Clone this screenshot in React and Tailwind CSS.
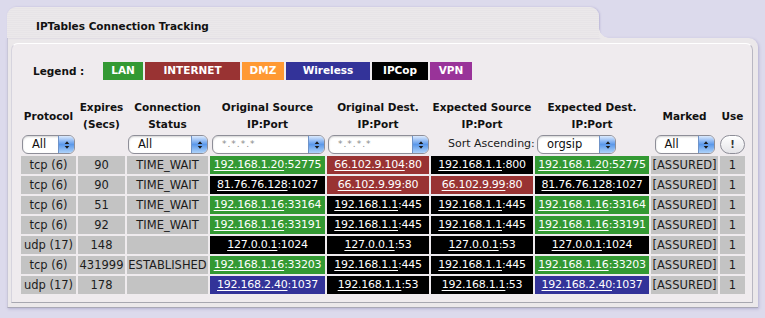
import React from 'react';

const legend = [
  { name: 'LAN', bg: 'bg-[#339933]', w: 'w-[40px]' },
  { name: 'INTERNET', bg: 'bg-[#993333]', w: 'w-[95px]' },
  { name: 'DMZ', bg: 'bg-[#ff9933]', w: 'w-[42px]' },
  { name: 'Wireless', bg: 'bg-[#333399]', w: 'w-[84px]' },
  { name: 'IPCop', bg: 'bg-[#000000]', w: 'w-[56px]' },
  { name: 'VPN', bg: 'bg-[#993399]', w: 'w-[42px]' },
];

const zone = {
  g: 'bg-[#339933]',
  r: 'bg-[#993333]',
  k: 'bg-[#000000]',
  b: 'bg-[#333399]',
};

const rows = [
  ['tcp (6)', '90', 'TIME_WAIT', ['g', '192.168.1.20', '52775'], ['r', '66.102.9.104', '80'], ['k', '192.168.1.1', '800'], ['g', '192.168.1.20', '52775']],
  ['tcp (6)', '90', 'TIME_WAIT', ['k', '81.76.76.128', '1027'], ['r', '66.102.9.99', '80'], ['r', '66.102.9.99', '80'], ['k', '81.76.76.128', '1027']],
  ['tcp (6)', '51', 'TIME_WAIT', ['g', '192.168.1.16', '33164'], ['k', '192.168.1.1', '445'], ['k', '192.168.1.1', '445'], ['g', '192.168.1.16', '33164']],
  ['tcp (6)', '92', 'TIME_WAIT', ['g', '192.168.1.16', '33191'], ['k', '192.168.1.1', '445'], ['k', '192.168.1.1', '445'], ['g', '192.168.1.16', '33191']],
  ['udp (17)', '148', '', ['k', '127.0.0.1', '1024'], ['k', '127.0.0.1', '53'], ['k', '127.0.0.1', '53'], ['k', '127.0.0.1', '1024']],
  ['tcp (6)', '431999', 'ESTABLISHED', ['g', '192.168.1.16', '33203'], ['k', '192.168.1.1', '445'], ['k', '192.168.1.1', '445'], ['g', '192.168.1.16', '33203']],
  ['udp (17)', '178', '', ['b', '192.168.2.40', '1037'], ['k', '192.168.1.1', '53'], ['k', '192.168.1.1', '53'], ['b', '192.168.2.40', '1037']],
];

function AquaSelect({ label, width, placeholder }) {
  return (
    <div className={`flex h-[19px] items-stretch rounded-[6px] border border-[#8e8e98] bg-white shadow-[inset_0_1px_2px_rgba(0,0,0,0.18)] ${width}`}>
      <span
        className={`flex flex-1 items-center overflow-hidden whitespace-nowrap pl-[9px] ${
          placeholder ? 'text-[9px] tracking-[1px] text-[#8a8a8a]' : 'text-[11.5px] text-[#111111]'
        }`}
      >
        {label}
      </span>
      <span className="flex w-[16px] items-center justify-center rounded-r-[5px] border-l border-[#6f93c8] bg-gradient-to-b from-[#dbe9fc] via-[#5b98ea] to-[#aed2f8]">
        <svg width="6" height="10" viewBox="0 0 6 10">
          <path d="M3 1.2 L5.3 4 H0.7Z M3 8.8 L5.3 6 H0.7Z" fill="#1a1a1a" />
        </svg>
      </span>
    </div>
  );
}

function IpCell({ cell }) {
  const [z, ip, port] = cell;
  return (
    <td className={`h-[18px] p-0 text-center text-[11px] tracking-[-0.25px] leading-[18px] whitespace-nowrap text-white ${zone[z]}`}>
      <span className="underline underline-offset-[2px]">{ip}</span>:{port}
    </td>
  );
}

function Grey({ children }) {
  return (
    <td className="h-[18px] bg-[#c3c3c3] p-0 text-center text-[11.5px] leading-[18px] whitespace-nowrap text-[#1c1c1c]">
      {children}
    </td>
  );
}

function Head({ children }) {
  return (
    <th className="h-[34px] p-0 text-center align-middle text-[10.5px] font-bold leading-[17px] whitespace-nowrap text-[#111111]">
      {children}
    </th>
  );
}

export default function App() {
  return (
    <div className="h-[318px] w-[765px] overflow-hidden bg-[#dcdaec] pl-[7px] pt-[7px] font-['DejaVu_Sans',sans-serif]">
      {/* Tab */}
      <div className="flex w-[751px]">
        <div className="h-[31px] w-[592px] rounded-t-[9px] bg-[repeating-linear-gradient(0deg,#ebe8ea_0px,#ebe8ea_1px,#e7e4e7_1px,#e7e4e7_2px)] pl-[29px] pt-[12px] shadow-[1px_0_2px_rgba(90,80,150,0.25)]">
          <span className="block text-[10.5px] font-bold leading-[14px] text-[#111111]">IPTables Connection Tracking</span>
        </div>
        <div className="h-[10px] w-[10px] self-end bg-[radial-gradient(circle_at_100%_0,transparent_9.5px,#ebe8ea_10px)]" />
      </div>

      {/* Panel */}
      <div className="h-[270px] w-[751px] rounded-tr-[9px] border-b border-l border-b-[#a9a8b6] border-l-[#c9c7d8] bg-[#ebe8ea] pl-[3px] pr-[5px] pt-[5px] shadow-[1px_1px_3px_rgba(90,80,150,0.3)]">
        <div className="h-[260px] rounded-t-[7px] border border-t-white border-l-[#d6d4de] border-r-[#b8b7c2] border-b-[#a7a7b0] bg-[#efebee]">
          {/* Legend */}
          <div className="flex items-center pl-[21px] pt-[18px]">
            <span className="w-[70px] text-[10.5px] font-bold leading-[18px] text-[#111111]">Legend :</span>
            <div className="flex gap-[2px]">
              {legend.map((l) => (
                <span
                  key={l.name}
                  className={`flex h-[18px] items-center justify-center text-[10.5px] font-bold text-white ${l.bg} ${l.w}`}
                >
                  {l.name}
                </span>
              ))}
            </div>
          </div>

          {/* Table */}
          <table className="ml-[7px] mt-[17px] w-[728px] table-fixed border-separate border-spacing-[2px]">
            <colgroup>
              <col className="w-[55px]" />
              <col className="w-[47px]" />
              <col className="w-[81px]" />
              <col className="w-[115px]" />
              <col className="w-[102px]" />
              <col className="w-[102px]" />
              <col className="w-[114px]" />
              <col className="w-[67px]" />
              <col className="w-[25px]" />
            </colgroup>
            <thead>
              <tr>
                <Head>Protocol</Head>
                <Head>Expires<br />(Secs)</Head>
                <Head>Connection<br />Status</Head>
                <Head>Original Source<br />IP:Port</Head>
                <Head>Original Dest.<br />IP:Port</Head>
                <Head>Expected Source<br />IP:Port</Head>
                <Head>Expected Dest.<br />IP:Port</Head>
                <Head>Marked</Head>
                <Head>Use</Head>
              </tr>
              <tr>
                <td className="h-[19px] p-0">
                  <div className="flex justify-center">
                    <AquaSelect label="All" width="w-[53px]" />
                  </div>
                </td>
                <td className="p-0" />
                <td className="p-0">
                  <div className="flex justify-end">
                    <AquaSelect label="All" width="w-[80px]" />
                  </div>
                </td>
                <td className="p-0">
                  <div className="flex justify-end">
                    <AquaSelect label="*.*.*.*" width="w-[113px]" placeholder />
                  </div>
                </td>
                <td className="p-0">
                  <div className="flex justify-end">
                    <AquaSelect label="*.*.*.*" width="w-[101px]" placeholder />
                  </div>
                </td>
                <td colSpan={2} className="p-0">
                  <div className="flex items-center pl-[17px]">
                    <span className="w-[89px] whitespace-nowrap text-[11px] text-[#1a1a1a]">Sort Ascending:</span>
                    <AquaSelect label="orgsip" width="w-[79px]" />
                  </div>
                </td>
                <td className="p-0">
                  <div className="flex justify-center">
                    <AquaSelect label="All" width="w-[60px]" />
                  </div>
                </td>
                <td className="p-0">
                  <div className="flex h-[19px] w-[25px] items-center justify-center rounded-full border border-[#8e8e98] bg-gradient-to-b from-white to-[#e4e4e8] text-[10px] font-bold text-[#333333]">
                    !
                  </div>
                </td>
              </tr>
            </thead>
            <tbody>
              {rows.map((r, i) => (
                <tr key={i}>
                  <Grey>{r[0]}</Grey>
                  <Grey>{r[1]}</Grey>
                  <Grey>{r[2]}</Grey>
                  <IpCell cell={r[3]} />
                  <IpCell cell={r[4]} />
                  <IpCell cell={r[5]} />
                  <IpCell cell={r[6]} />
                  <Grey>[ASSURED]</Grey>
                  <Grey>1</Grey>
                </tr>
              ))}
            </tbody>
          </table>
        </div>
      </div>
    </div>
  );
}
